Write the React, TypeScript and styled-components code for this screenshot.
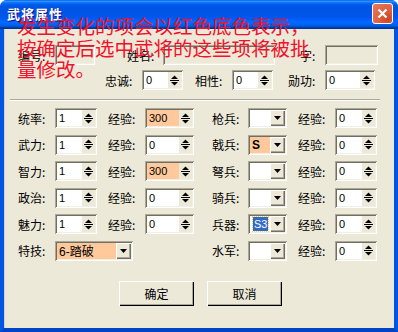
import React from "react";
import styled, { createGlobalStyle } from "styled-components";

const GlobalStyle = createGlobalStyle`
  html, body {
    margin: 0;
    padding: 0;
    background: #ffffff;
  }
  body {
    font-family: "Noto Sans CJK SC", sans-serif;
  }
`;

const FACE = "#ece9d8";
const PEACH = "#ffc99c";

const Window = styled.div`
  position: relative;
  width: 398px;
  height: 332px;
  display: flex;
  flex-direction: column;
  border-radius: 7px 7px 0 0;
  overflow: hidden;
  background: #0054e3;
`;

const TitleBar = styled.div`
  flex: none;
  height: 29px;
  display: flex;
  align-items: center;
  justify-content: space-between;
  padding: 0 5px 0 7px;
  background: linear-gradient(
    #0058ee 0%,
    #3593ff 4%,
    #288eff 6%,
    #127dff 8%,
    #036ffc 10%,
    #0262ee 14%,
    #0057e5 20%,
    #0054e3 24%,
    #0055eb 56%,
    #005bf5 66%,
    #026afe 76%,
    #0062ef 86%,
    #0052d6 92%,
    #0040ab 94%,
    #003092 100%
  );
`;

const Title = styled.span`
  color: #ffffff;
  font: bold 13px "Noto Sans CJK SC", sans-serif;
  letter-spacing: 1px;
  text-shadow: 1px 1px #0f1089;
  margin-top: -2px;
`;

const CloseButton = styled.div`
  width: 21px;
  height: 21px;
  box-sizing: border-box;
  border: 1px solid #ffffff;
  border-radius: 3px;
  background: radial-gradient(circle at 80% 80%, #cc4628 0%, #e0603f 45%, #e97a5c 100%);
  display: flex;
  align-items: center;
  justify-content: center;
  margin-top: -2px;
`;

const Client = styled.div`
  flex: 1;
  display: flex;
  flex-direction: column;
  background: ${FACE};
  border-left: 4px solid #0055e5;
  border-right: 4px solid #0055e5;
  border-bottom: 4px solid #0044c8;
  box-shadow: inset 1px 0 #d8d2bd;
`;

const Row = styled.div<{ $pl: number; $mt: number }>`
  display: flex;
  align-items: center;
  height: 20px;
  padding-left: ${(p) => p.$pl}px;
  margin-top: ${(p) => p.$mt}px;
`;

const Label = styled.span<{ $w: number; $ml?: number }>`
  flex: none;
  width: ${(p) => p.$w}px;
  margin-left: ${(p) => p.$ml ?? 0}px;
  font-size: 12px;
  color: #000000;
  white-space: nowrap;
`;

const Sunken = styled.div<{ $w: number; $bg: string }>`
  flex: none;
  box-sizing: border-box;
  width: ${(p) => p.$w}px;
  height: 20px;
  padding: 2px;
  display: flex;
  background: ${(p) => p.$bg};
  box-shadow: inset 1px 1px #aca899, inset -1px -1px #ffffff,
    inset 2px 2px #716f64, inset -2px -2px #f1efe2;
`;

const Value = styled.span`
  flex: 1;
  padding-left: 2px;
  font: 11px "Liberation Sans", "Noto Sans CJK SC", sans-serif;
  line-height: 16px;
  color: #000000;
  white-space: nowrap;
  overflow: hidden;
`;

const SpinButtons = styled.div`
  flex: none;
  width: 13px;
  background: ${FACE};
  display: flex;
  align-items: center;
  justify-content: center;
`;

const DropButton = styled.div`
  flex: none;
  width: 15px;
  background: ${FACE};
  box-shadow: inset 1px 1px #ffffff, inset -1px -1px #716f64,
    inset -2px -2px #aca899;
  display: flex;
  align-items: center;
  justify-content: center;
`;

const Selected = styled.span`
  margin: 1px;
  padding: 0 1px;
  background: #316ac5;
  color: #ffffff;
  outline: 1px dotted #ffcc55;
  font: 11px "Liberation Sans", sans-serif;
  line-height: 14px;
`;

const ComboText = styled.span<{ $bold?: boolean }>`
  flex: 1;
  display: flex;
  align-items: center;
  padding-left: 2px;
  font: ${(p) => (p.$bold ? "bold 12px" : "12px")} "Liberation Sans", "Noto Sans CJK SC", sans-serif;
  color: #000000;
  white-space: nowrap;
  overflow: hidden;
`;

const Separator = styled.div`
  height: 0;
  margin: 9px 14px 0 6px;
  border-top: 1px solid #aca899;
  border-bottom: 1px solid #ffffff;
`;

const Grid = styled.div`
  display: grid;
  grid-template-columns: 37px 42px 11px 37px 49px 18px 36px 39px 11px 37px 42px;
  grid-auto-rows: 20px;
  row-gap: 6.5px;
  align-items: center;
  padding-left: 14px;
  margin-top: 7px;
`;

const Cell = styled.div<{ $col: string }>`
  grid-column: ${(p) => p.$col};
  display: flex;
  align-items: center;
`;

const ButtonBar = styled.div`
  display: flex;
  justify-content: center;
  gap: 13px;
  margin-top: 20px;
  padding-left: 3px;
`;

const PushButton = styled.div`
  width: 75px;
  height: 25px;
  box-sizing: border-box;
  display: flex;
  align-items: center;
  justify-content: center;
  font-size: 12px;
  color: #000000;
  background: ${FACE};
  box-shadow: inset 1px 1px #ffffff, inset -1px -1px #000000,
    inset -2px -2px #aca899;
`;

const Notice = styled.div`
  position: absolute;
  left: 17px;
  top: 15px;
  width: 310px;
  font: 19.5px "Noto Sans CJK SC", sans-serif;
  line-height: 21.5px;
  color: #f2102a;
  pointer-events: none;
`;

const SpinArrows = () => (
  <svg width="9" height="13" viewBox="0 0 9 13">
    <polygon points="1,5 8,5 4.5,1.5" fill="#000" />
    <rect x="0" y="6" width="9" height="1" fill="#000" />
    <polygon points="1,8 8,8 4.5,11.5" fill="#000" />
  </svg>
);

const DropArrow = () => (
  <svg width="7" height="4" viewBox="0 0 7 4">
    <polygon points="0,0 7,0 3.5,4" fill="#000" />
  </svg>
);

const Spin = ({ w, value, hi }: { w: number; value: string; hi?: boolean }) => (
  <Sunken $w={w} $bg={hi ? PEACH : "#ffffff"}>
    <Value>{value}</Value>
    <SpinButtons>
      <SpinArrows />
    </SpinButtons>
  </Sunken>
);

const Combo = ({
  w,
  value,
  hi,
  sel,
  bold,
}: {
  w: number;
  value?: string;
  hi?: boolean;
  sel?: boolean;
  bold?: boolean;
}) => (
  <Sunken $w={w} $bg={hi ? PEACH : "#ffffff"}>
    <ComboText $bold={bold}>{sel ? <Selected>{value}</Selected> : value}</ComboText>
    <DropButton>
      <DropArrow />
    </DropButton>
  </Sunken>
);

const leftRows = [
  { name: "统率:", v: "1", exp: "300", hi: true },
  { name: "武力:", v: "1", exp: "0" },
  { name: "智力:", v: "1", exp: "300", hi: true },
  { name: "政治:", v: "1", exp: "0" },
  { name: "魅力:", v: "1", exp: "0" },
];

const rightRows = [
  { name: "枪兵:" },
  { name: "戟兵:", v: "S", hi: true, bold: true },
  { name: "弩兵:" },
  { name: "骑兵:" },
  { name: "兵器:", v: "S3", sel: true },
  { name: "水军:" },
];

export default function App() {
  return (
    <>
      <GlobalStyle />
      <Window>
        <TitleBar>
          <Title>武将属性</Title>
          <CloseButton>
            <svg width="11" height="11" viewBox="0 0 11 11">
              <path d="M1.5 1.5 L9.5 9.5 M9.5 1.5 L1.5 9.5" stroke="#fff" strokeWidth="2.2" />
            </svg>
          </CloseButton>
        </TitleBar>
        <Client>
          <Row $pl={14} $mt={16}>
            <Label $w={37}>编号:</Label>
            <Sunken $w={40} $bg={FACE} />
            <Label $w={36} $ml={32}>姓名:</Label>
            <Sunken $w={112} $bg={FACE} />
            <Label $w={25} $ml={25}>字:</Label>
            <Sunken $w={53} $bg={FACE} />
          </Row>
          <Row $pl={101} $mt={5}>
            <Label $w={37}>忠诚:</Label>
            <Spin w={41} value="0" />
            <Label $w={37} $ml={12}>相性:</Label>
            <Spin w={41} value="0" />
            <Label $w={37} $ml={15}>勋功:</Label>
            <Spin w={50} value="0" />
          </Row>
          <Separator />
          <Grid>
            {rightRows.map((r, i) => (
              <React.Fragment key={r.name}>
                {i < leftRows.length ? (
                  <>
                    <Cell $col="1" style={{ gridRow: i + 1 }}>
                      <Label $w={37}>{leftRows[i].name}</Label>
                    </Cell>
                    <Cell $col="2" style={{ gridRow: i + 1 }}>
                      <Spin w={42} value={leftRows[i].v} />
                    </Cell>
                    <Cell $col="4" style={{ gridRow: i + 1 }}>
                      <Label $w={37}>经验:</Label>
                    </Cell>
                    <Cell $col="5" style={{ gridRow: i + 1 }}>
                      <Spin w={49} value={leftRows[i].exp} hi={leftRows[i].hi} />
                    </Cell>
                  </>
                ) : (
                  <>
                    <Cell $col="1" style={{ gridRow: i + 1 }}>
                      <Label $w={37}>特技:</Label>
                    </Cell>
                    <Cell $col="2 / span 4" style={{ gridRow: i + 1 }}>
                      <Combo w={78} value="6-踏破" hi />
                    </Cell>
                  </>
                )}
                <Cell $col="7" style={{ gridRow: i + 1 }}>
                  <Label $w={36}>{r.name}</Label>
                </Cell>
                <Cell $col="8" style={{ gridRow: i + 1 }}>
                  <Combo w={39} value={r.v} hi={r.hi} sel={r.sel} bold={r.bold} />
                </Cell>
                <Cell $col="10" style={{ gridRow: i + 1 }}>
                  <Label $w={37}>经验:</Label>
                </Cell>
                <Cell $col="11" style={{ gridRow: i + 1 }}>
                  <Spin w={42} value="0" />
                </Cell>
              </React.Fragment>
            ))}
          </Grid>
          <ButtonBar>
            <PushButton>确定</PushButton>
            <PushButton>取消</PushButton>
          </ButtonBar>
        </Client>
        <Notice>
          发生变化的项会以红色底色表示，
          <br />
          按确定后选中武将的这些项将被批
          <br />
          量修改。
        </Notice>
      </Window>
    </>
  );
}
